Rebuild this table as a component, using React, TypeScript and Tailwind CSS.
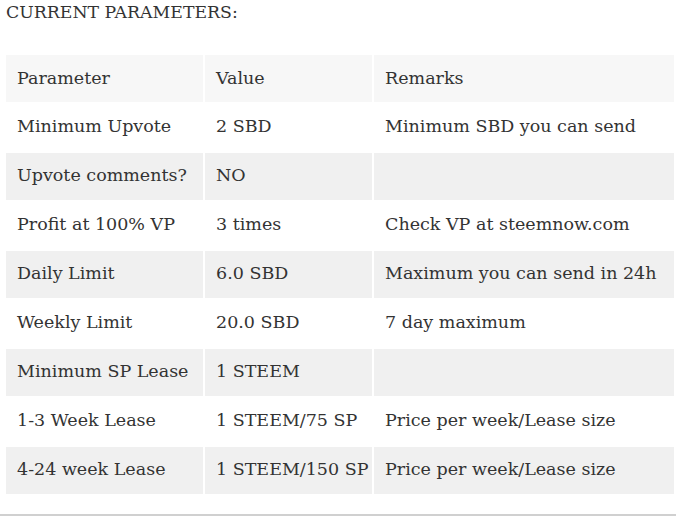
import React from 'react';

const rows: [string, string, string][] = [
  ['Minimum Upvote', '2 SBD', 'Minimum SBD you can send'],
  ['Upvote comments?', 'NO', ''],
  ['Profit at 100% VP', '3 times', 'Check VP at steemnow.com'],
  ['Daily Limit', '6.0 SBD', 'Maximum you can send in 24h'],
  ['Weekly Limit', '20.0 SBD', '7 day maximum'],
  ['Minimum SP Lease', '1 STEEM', ''],
  ['1-3 Week Lease', '1 STEEM/75 SP', 'Price per week/Lease size'],
  ['4-24 week Lease', '1 STEEM/150 SP', 'Price per week/Lease size'],
];

export default function App() {
  return (
    <div className="w-[682px] h-[522px] bg-white text-[#333] font-['DejaVu_Serif',serif] text-[17.5px]">
      {/* Heading */}
      <div className="pl-[6px] pt-[1px] h-[53px] text-[17.3px] leading-[22px]">CURRENT PARAMETERS:</div>

      {/* Table */}
      <table className="ml-[4px] table-fixed w-[672px] border-separate border-spacing-[2px] whitespace-nowrap">
        <thead>
          <tr className="bg-[#f7f7f7]">
            <th className="w-[197px] h-[47px] px-[11px] text-left font-normal">Parameter</th>
            <th className="w-[167px] h-[47px] px-[11px] text-left font-normal">Value</th>
            <th className="w-[300px] h-[47px] px-[11px] text-left font-normal">Remarks</th>
          </tr>
        </thead>
        <tbody>
          {rows.map((r, i) => (
            <tr key={i} className={i % 2 === 1 ? 'bg-[#f0f0f0]' : 'bg-white'}>
              <td className="h-[47px] px-[11px] pb-[2px]">{r[0]}</td>
              <td className="h-[47px] px-[11px] pb-[2px]">{r[1]}</td>
              <td className="h-[47px] px-[11px] pb-[2px]">{r[2]}</td>
            </tr>
          ))}
        </tbody>
      </table>

      <div className="mt-[18px] w-[676px] border-t-2 border-[#d0d0d0]" />
    </div>
  );
}
